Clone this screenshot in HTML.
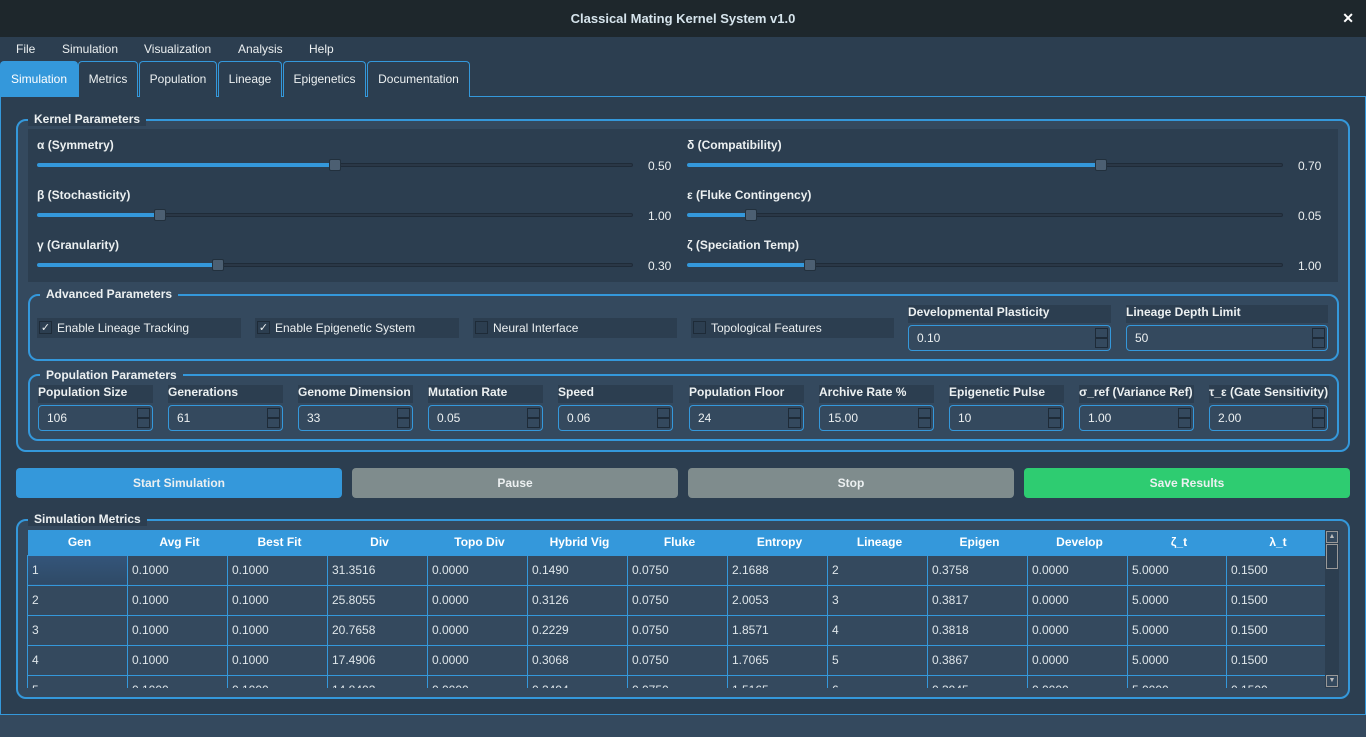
<!DOCTYPE html>
<html><head><meta charset="utf-8"><style>
*{box-sizing:border-box;margin:0;padding:0}
body{width:1366px;height:737px;background:#34495e;font-family:"Liberation Sans",sans-serif;font-size:12px;color:#ecf0f1;position:relative;overflow:hidden}
.a{position:absolute}
.title{left:0;top:0;width:1366px;height:37px;background:#1e272c;text-align:center;line-height:37px;font-weight:bold;font-size:13px;color:#d6e4ec}
.menu{left:0;top:37px;width:1366px;height:60px;background:#2c3e50}
.menu span{position:absolute;top:5px;font-size:12px}
.tab{top:61px;height:36px;border:1px solid #3498db;border-bottom:none;border-radius:4px 4px 0 0;background:#2c3e50;text-align:center;line-height:34px}
.panel{left:0;top:96px;width:1366px;height:619px;background:#2c3e50;border:1px solid #3498db}
.grp{border:2px solid #3498db;border-radius:10px;background:#34495e}
.gt{font-weight:bold;background:#2c3e50;padding:0 6px;top:-9px;left:10px;line-height:14px;position:absolute}
.lbl{font-weight:bold}
.track{height:4px;background:#2a3746;border:1px solid #1f2b38;border-radius:2px}
.fill{height:4px;background:#3498db;border-radius:2px}
.h{width:12px;height:12px;background:#4c5f72;border:1px solid #22303d;border-radius:2px}
.cb{height:20px;background:#2c3e50}
.cb i{position:absolute;left:2px;top:3px;width:13px;height:13px;border:1px solid #1e2b38;background:#2c3e50;font-style:normal;font-size:11px;line-height:12px;text-align:center}
.cb span{position:absolute;left:20px;top:3px}
.lb{height:18px;background:#2c3e50;font-weight:bold;line-height:14px}
.in{height:26px;border:1px solid #3498db;border-radius:4px;background:#34495e;padding-left:8px;line-height:24px}
.in b{position:absolute;right:2px;width:13px;height:10px;border:1px solid #1e2b38;background:#34495e}
.btn{top:468px;height:30px;border-radius:4px;text-align:center;line-height:30px;font-weight:bold}
table{border-collapse:collapse;table-layout:fixed}
td,th{border:1px solid #3498db;height:30px;padding-left:4px;text-align:left;font-weight:normal;color:#dfe6ea;white-space:nowrap;overflow:hidden}
th{background:#3498db;height:25px;text-align:center;font-weight:bold;color:#fff;border:none}
td{background:#34495e}
</style></head><body>
<div class="a title">Classical Mating Kernel System v1.0<span style="position:absolute;right:12px;font-size:14px;color:#fff">✕</span></div>
<div class="a menu"><span style="left:16px">File</span><span style="left:62px">Simulation</span><span style="left:144px">Visualization</span><span style="left:238px">Analysis</span><span style="left:309px">Help</span></div>
<div class="a panel"></div>
<div class="a tab" style="left:0;width:78px;background:#3498db;color:#fff">Simulation</div>
<div class="a tab" style="left:78px;width:60px">Metrics</div>
<div class="a tab" style="left:139px;width:78px">Population</div>
<div class="a tab" style="left:218px;width:64px">Lineage</div>
<div class="a tab" style="left:283px;width:83px">Epigenetics</div>
<div class="a tab" style="left:367px;width:103px">Documentation</div>

<div class="a grp" style="left:16px;top:119px;width:1334px;height:333px"><div class="gt">Kernel Parameters</div></div>
<div class="a" style="left:28px;top:129px;width:1310px;height:153px;background:#2c3e50"></div>
<div class="a lbl" style="left:37px;top:138px">α (Symmetry)</div>
<div class="a lbl" style="left:37px;top:188px">β (Stochasticity)</div>
<div class="a lbl" style="left:37px;top:238px">γ (Granularity)</div>
<div class="a lbl" style="left:687px;top:138px">δ (Compatibility)</div>
<div class="a lbl" style="left:687px;top:188px">ε (Fluke Contingency)</div>
<div class="a lbl" style="left:687px;top:238px">ζ (Speciation Temp)</div>
<div class="a track" style="left:37px;top:163px;width:596px"></div><div class="a fill" style="left:37px;top:163px;width:298px"></div><div class="a h" style="left:329px;top:159px"></div>
<div class="a track" style="left:37px;top:213px;width:596px"></div><div class="a fill" style="left:37px;top:213px;width:123px"></div><div class="a h" style="left:154px;top:209px"></div>
<div class="a track" style="left:37px;top:263px;width:596px"></div><div class="a fill" style="left:37px;top:263px;width:181px"></div><div class="a h" style="left:212px;top:259px"></div>
<div class="a track" style="left:687px;top:163px;width:596px"></div><div class="a fill" style="left:687px;top:163px;width:414px"></div><div class="a h" style="left:1095px;top:159px"></div>
<div class="a track" style="left:687px;top:213px;width:596px"></div><div class="a fill" style="left:687px;top:213px;width:64px"></div><div class="a h" style="left:745px;top:209px"></div>
<div class="a track" style="left:687px;top:263px;width:596px"></div><div class="a fill" style="left:687px;top:263px;width:123px"></div><div class="a h" style="left:804px;top:259px"></div>
<div class="a" style="left:648px;top:159px">0.50</div><div class="a" style="left:648px;top:209px">1.00</div><div class="a" style="left:648px;top:259px">0.30</div>
<div class="a" style="left:1298px;top:159px">0.70</div><div class="a" style="left:1298px;top:209px">0.05</div><div class="a" style="left:1298px;top:259px">1.00</div>

<div class="a grp" style="left:28px;top:294px;width:1311px;height:67px"><div class="gt" style="background:#34495e">Advanced Parameters</div></div>
<div class="a cb" style="left:37px;top:318px;width:204px"><i>✓</i><span>Enable Lineage Tracking</span></div>
<div class="a cb" style="left:255px;top:318px;width:204px"><i>✓</i><span>Enable Epigenetic System</span></div>
<div class="a cb" style="left:473px;top:318px;width:204px"><i></i><span>Neural Interface</span></div>
<div class="a cb" style="left:691px;top:318px;width:203px"><i></i><span>Topological Features</span></div>
<div class="a lb" style="left:908px;top:305px;width:203px">Developmental Plasticity</div>
<div class="a in" style="left:908px;top:325px;width:203px">0.10<b style="top:2px"></b><b style="top:12px"></b></div>
<div class="a lb" style="left:1126px;top:305px;width:202px">Lineage Depth Limit</div>
<div class="a in" style="left:1126px;top:325px;width:202px">50<b style="top:2px"></b><b style="top:12px"></b></div>

<div class="a grp" style="left:28px;top:374px;width:1311px;height:67px"><div class="gt" style="background:#34495e;top:-8px">Population Parameters</div></div>
<div class="a lb" style="left:38px;top:385px;width:115px">Population Size</div><div class="a in" style="left:38px;top:405px;width:115px">106<b style="top:2px"></b><b style="top:12px"></b></div>
<div class="a lb" style="left:168px;top:385px;width:115px">Generations</div><div class="a in" style="left:168px;top:405px;width:115px">61<b style="top:2px"></b><b style="top:12px"></b></div>
<div class="a lb" style="left:298px;top:385px;width:115px">Genome Dimension</div><div class="a in" style="left:298px;top:405px;width:115px">33<b style="top:2px"></b><b style="top:12px"></b></div>
<div class="a lb" style="left:428px;top:385px;width:115px">Mutation Rate</div><div class="a in" style="left:428px;top:405px;width:115px">0.05<b style="top:2px"></b><b style="top:12px"></b></div>
<div class="a lb" style="left:558px;top:385px;width:115px">Speed</div><div class="a in" style="left:558px;top:405px;width:115px">0.06<b style="top:2px"></b><b style="top:12px"></b></div>
<div class="a lb" style="left:689px;top:385px;width:115px">Population Floor</div><div class="a in" style="left:689px;top:405px;width:115px">24<b style="top:2px"></b><b style="top:12px"></b></div>
<div class="a lb" style="left:819px;top:385px;width:115px">Archive Rate %</div><div class="a in" style="left:819px;top:405px;width:115px">15.00<b style="top:2px"></b><b style="top:12px"></b></div>
<div class="a lb" style="left:949px;top:385px;width:115px">Epigenetic Pulse</div><div class="a in" style="left:949px;top:405px;width:115px">10<b style="top:2px"></b><b style="top:12px"></b></div>
<div class="a lb" style="left:1079px;top:385px;width:115px">σ_ref (Variance Ref)</div><div class="a in" style="left:1079px;top:405px;width:115px">1.00<b style="top:2px"></b><b style="top:12px"></b></div>
<div class="a lb" style="left:1209px;top:385px;width:120px">τ_ε (Gate Sensitivity)</div><div class="a in" style="left:1209px;top:405px;width:119px">2.00<b style="top:2px"></b><b style="top:12px"></b></div>

<div class="a btn" style="left:16px;width:326px;background:#3498db">Start Simulation</div>
<div class="a btn" style="left:352px;width:326px;background:#7f8c8d">Pause</div>
<div class="a btn" style="left:688px;width:326px;background:#7f8c8d">Stop</div>
<div class="a btn" style="left:1024px;width:326px;background:#2ecc71">Save Results</div>

<div class="a grp" style="left:16px;top:519px;width:1334px;height:180px"><div class="gt">Simulation Metrics</div></div>
<div class="a" style="left:27px;top:530px;width:1298px;height:158px;overflow:hidden;background:#34495e">
<table style="width:1298px">
<colgroup><col style="width:100px"><col style="width:100px"><col style="width:100px"><col style="width:100px"><col style="width:100px"><col style="width:100px"><col style="width:100px"><col style="width:100px"><col style="width:100px"><col style="width:100px"><col style="width:100px"><col style="width:99px"><col style="width:99px"></colgroup>
<tr><th>Gen</th><th>Avg Fit</th><th>Best Fit</th><th>Div</th><th>Topo Div</th><th>Hybrid Vig</th><th>Fluke</th><th>Entropy</th><th>Lineage</th><th>Epigen</th><th>Develop</th><th>ζ_t</th><th>λ_t</th></tr>
<tr><td style="background:linear-gradient(#34557a,#2f4a66)">1</td><td>0.1000</td><td>0.1000</td><td>31.3516</td><td>0.0000</td><td>0.1490</td><td>0.0750</td><td>2.1688</td><td>2</td><td>0.3758</td><td>0.0000</td><td>5.0000</td><td>0.1500</td></tr>
<tr><td>2</td><td>0.1000</td><td>0.1000</td><td>25.8055</td><td>0.0000</td><td>0.3126</td><td>0.0750</td><td>2.0053</td><td>3</td><td>0.3817</td><td>0.0000</td><td>5.0000</td><td>0.1500</td></tr>
<tr><td>3</td><td>0.1000</td><td>0.1000</td><td>20.7658</td><td>0.0000</td><td>0.2229</td><td>0.0750</td><td>1.8571</td><td>4</td><td>0.3818</td><td>0.0000</td><td>5.0000</td><td>0.1500</td></tr>
<tr><td>4</td><td>0.1000</td><td>0.1000</td><td>17.4906</td><td>0.0000</td><td>0.3068</td><td>0.0750</td><td>1.7065</td><td>5</td><td>0.3867</td><td>0.0000</td><td>5.0000</td><td>0.1500</td></tr>
<tr><td>5</td><td>0.1000</td><td>0.1000</td><td>14.8403</td><td>0.0000</td><td>0.2494</td><td>0.0750</td><td>1.5165</td><td>6</td><td>0.3945</td><td>0.0000</td><td>5.0000</td><td>0.1500</td></tr>
</table></div>
<div class="a" style="left:1325px;top:530px;width:14px;height:158px;background:#2c3e50"></div>
<div class="a" style="left:1326px;top:531px;width:12px;height:12px;background:#34495e;border:1px solid #999;font-size:7px;text-align:center;line-height:10px;color:#bbb">▲</div>
<div class="a" style="left:1326px;top:544px;width:12px;height:25px;background:#2c3e50;border:1px solid #999"></div>
<div class="a" style="left:1326px;top:675px;width:12px;height:12px;background:#34495e;border:1px solid #999;font-size:7px;text-align:center;line-height:10px;color:#bbb">▼</div>
</body></html>
